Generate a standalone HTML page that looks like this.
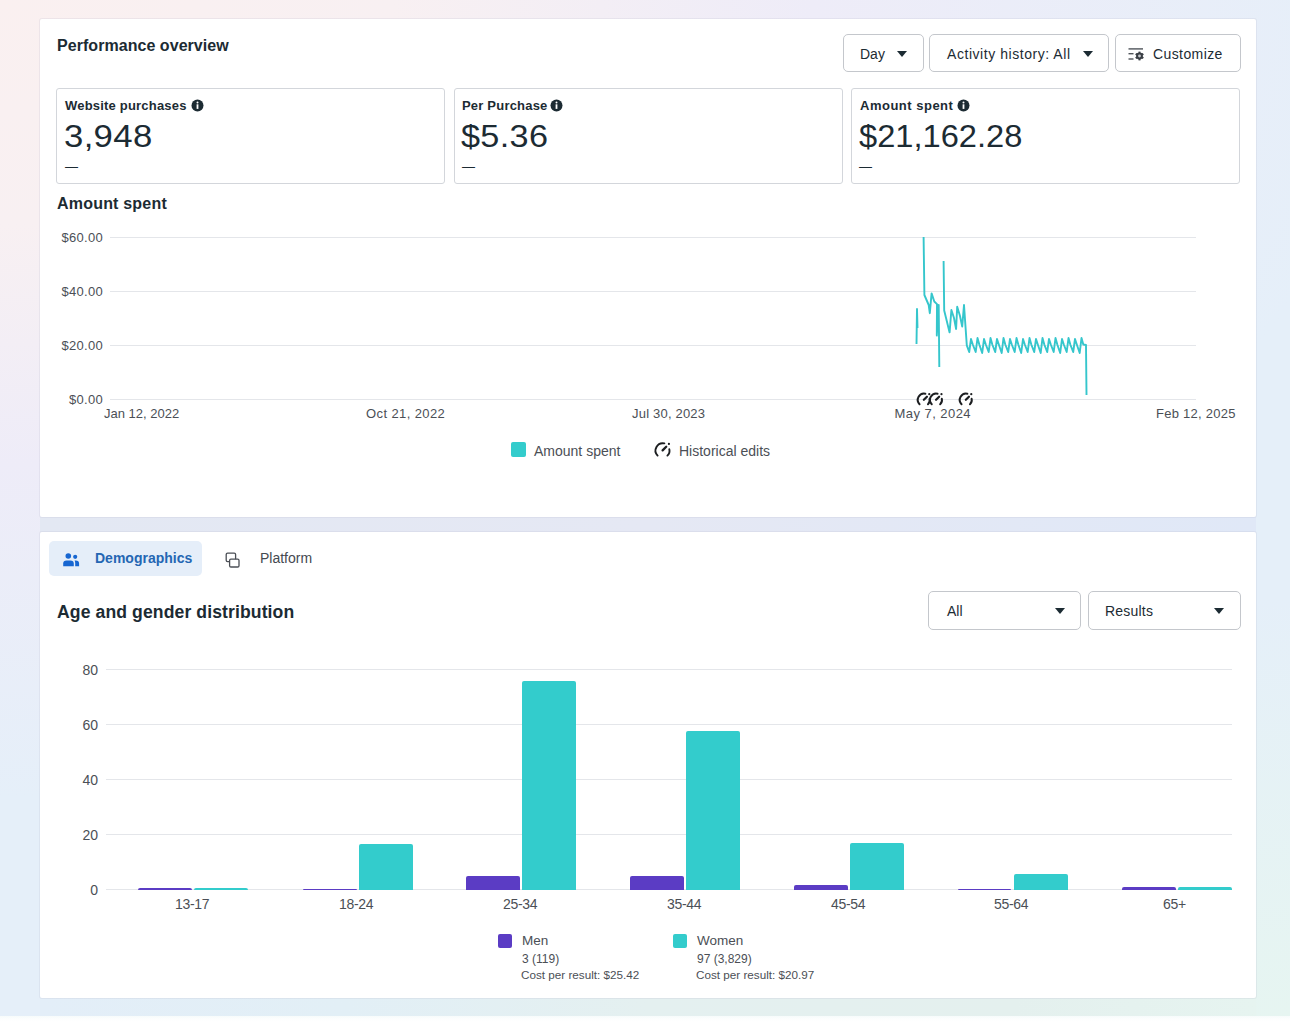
<!DOCTYPE html>
<html><head><meta charset="utf-8">
<style>
*{margin:0;padding:0;box-sizing:border-box}
html,body{width:1290px;height:1027px;overflow:hidden}
body{position:relative;font-family:"Liberation Sans",sans-serif;color:#1c2b33;background:#fcfdfd;}
#bg2{position:absolute;left:0;top:0;width:1290px;height:1016px;background:radial-gradient(ellipse 820px 420px at 1290px 1016px,rgba(230,245,241,1) 0%,rgba(230,245,241,0.55) 50%,rgba(230,245,241,0) 100%),radial-gradient(ellipse 1400px 800px at 0 0,rgb(250,240,240) 0%,rgb(248,240,242) 28%,rgb(238,236,248) 58%,rgba(232,237,248,0) 100%),#e5eff9;}
#bg3{display:none}
#strip{position:absolute;left:0;top:1016px;width:1290px;height:11px;background:linear-gradient(180deg,#f6fbfb 0,#fdfefe 3px,#fff 6px)}
#gap{position:absolute;left:40px;top:517px;width:1216px;height:15px;background:linear-gradient(90deg,rgb(227,232,243),rgb(229,232,244) 50%,rgb(224,232,247))}
#bband{position:absolute;left:40px;top:998px;width:1216px;height:18px;background:linear-gradient(90deg,rgb(227,238,248),rgb(226,239,246) 25%,rgb(228,240,240) 50%,rgb(228,240,238) 80%,rgb(230,244,240))}
.card{position:absolute;left:40px;width:1216px;background:#fff;border-radius:2px;box-shadow:0 0 0 1px rgba(180,180,200,0.18)}
.t{position:absolute;white-space:nowrap;line-height:1}
.btn{position:absolute;border:1.3px solid #c4c7cc;border-radius:5px;background:#fff}
.arrow{position:absolute;width:0;height:0;border-left:5.5px solid transparent;border-right:5.5px solid transparent;border-top:6px solid #1c2b33}
.box{position:absolute;top:88px;height:96px;border:1px solid #d3d6db;border-radius:3px}
.grid{position:absolute;height:1px;background:#e4e6ea}
.lab{position:absolute;white-space:nowrap;line-height:1;font-size:13px;color:#4b4f56}
.bar{position:absolute;border-radius:2px 2px 0 0}
.m{background:#5b3cc4}
.w{background:#33cccc}
</style></head><body>
<div id="bg2"></div><div id="bg3"></div><div id="strip"></div><div id="gap"></div><div id="bband"></div>

<!-- CARD 1 -->
<div class="card" style="top:19px;height:498px"></div>
<div class="t" style="left:57px;top:38px;font-size:16px;font-weight:bold;letter-spacing:0.05px">Performance overview</div>

<div class="btn" style="left:843px;top:34px;width:81px;height:38px"></div>
<div class="t" style="left:860px;top:47px;font-size:14px;color:#1c2b33">Day</div>
<div class="arrow" style="left:897px;top:51px"></div>

<div class="btn" style="left:929px;top:34px;width:180px;height:38px"></div>
<div class="t" style="left:947px;top:47px;font-size:14px;letter-spacing:0.55px">Activity history: All</div>
<div class="arrow" style="left:1083px;top:51px"></div>

<div class="btn" style="left:1115px;top:34px;width:126px;height:38px"></div>
<svg style="position:absolute;left:1128px;top:47px" width="17" height="14" viewBox="0 0 17 14">
 <rect x="0.5" y="1.2" width="14.5" height="1.4" fill="#50555b"/>
 <rect x="0.5" y="6" width="5" height="1.4" fill="#50555b"/>
 <rect x="0.5" y="11.3" width="5" height="1.4" fill="#50555b"/>
 <g transform="translate(11.5 9)"><circle r="3.4" fill="#3a3f45"/><g fill="#3a3f45"><rect x="-1" y="-4.4" width="2" height="8.8"/><rect x="-1" y="-4.4" width="2" height="8.8" transform="rotate(60)"/><rect x="-1" y="-4.4" width="2" height="8.8" transform="rotate(120)"/></g><circle r="1.4" fill="#c8cbcf"/></g>
</svg>
<div class="t" style="left:1153px;top:47px;font-size:14px;letter-spacing:0.4px">Customize</div>

<div class="box" style="left:56px;width:389px"></div>
<div class="box" style="left:454px;width:389px"></div>
<div class="box" style="left:851px;width:389px"></div>

<div class="t" style="left:65px;top:99px;font-size:13px;font-weight:bold;letter-spacing:0.2px">Website purchases</div>
<svg style="position:absolute;left:191px;top:99px" width="13" height="13" viewBox="0 0 13 13"><circle cx="6.5" cy="6.5" r="6" fill="#1c2b33"/><rect x="5.6" y="5.3" width="1.8" height="4.6" fill="#fff"/><circle cx="6.5" cy="3.6" r="1" fill="#fff"/></svg>
<div class="t" style="left:64px;top:120px;font-size:32px;letter-spacing:0.3px;transform:scaleX(1.085);transform-origin:0 0">3,948</div>
<div class="t" style="left:65px;top:160px;font-size:13px">—</div>

<div class="t" style="left:462px;top:99px;font-size:13px;font-weight:bold;letter-spacing:0.2px">Per Purchase</div>
<svg style="position:absolute;left:550px;top:99px" width="13" height="13" viewBox="0 0 13 13"><circle cx="6.5" cy="6.5" r="6" fill="#1c2b33"/><rect x="5.6" y="5.3" width="1.8" height="4.6" fill="#fff"/><circle cx="6.5" cy="3.6" r="1" fill="#fff"/></svg>
<div class="t" style="left:461px;top:120px;font-size:32px;letter-spacing:0.3px;transform:scaleX(1.07);transform-origin:0 0">$5.36</div>
<div class="t" style="left:462px;top:160px;font-size:13px">—</div>

<div class="t" style="left:860px;top:99px;font-size:13px;font-weight:bold;letter-spacing:0.5px">Amount spent</div>
<svg style="position:absolute;left:957px;top:99px" width="13" height="13" viewBox="0 0 13 13"><circle cx="6.5" cy="6.5" r="6" fill="#1c2b33"/><rect x="5.6" y="5.3" width="1.8" height="4.6" fill="#fff"/><circle cx="6.5" cy="3.6" r="1" fill="#fff"/></svg>
<div class="t" style="left:859px;top:120px;font-size:32px;letter-spacing:0px;transform:scaleX(1.02);transform-origin:0 0">$21,162.28</div>
<div class="t" style="left:859px;top:160px;font-size:13px">—</div>

<div class="t" style="left:57px;top:196px;font-size:16px;font-weight:bold;letter-spacing:0.2px">Amount spent</div>

<!-- line chart grid -->
<div class="grid" style="left:110px;top:237px;width:1086px"></div>
<div class="grid" style="left:110px;top:291px;width:1086px"></div>
<div class="grid" style="left:110px;top:345px;width:1086px"></div>
<div class="grid" style="left:110px;top:399px;width:1086px"></div>
<div class="lab" style="right:1187px;top:231px;font-size:13px;letter-spacing:0.3px">$60.00</div>
<div class="lab" style="right:1187px;top:285px;font-size:13px;letter-spacing:0.3px">$40.00</div>
<div class="lab" style="right:1187px;top:339px;font-size:13px;letter-spacing:0.3px">$20.00</div>
<div class="lab" style="right:1187px;top:393px;font-size:13px;letter-spacing:0.3px">$0.00</div>

<div class="lab" style="left:104px;top:407px">Jan 12, 2022</div>
<div class="lab" style="left:366px;top:407px;letter-spacing:0.4px">Oct 21, 2022</div>
<div class="lab" style="left:632px;top:407px;letter-spacing:0.2px">Jul 30, 2023</div>
<div class="lab" style="left:894.5px;top:407px;letter-spacing:0.45px">May 7, 2024</div>
<div class="lab" style="left:1156px;top:407px;letter-spacing:0.25px">Feb 12, 2025</div>

<svg style="position:absolute;left:0;top:0" width="1290" height="520">
<!--MARKS--><g transform="translate(918.6 393) scale(0.86) translate(-656.5 -442.5)"><g fill="none" stroke="#1c1e21" stroke-width="2.3" stroke-linecap="round"><path d="M657.6 455.6 A7.3 7.3 0 0 1 664.4 443.4"/><path d="M669.3 449.2 A6.5 6.5 0 0 1 667.4 455.6"/><path d="M662.6 450.4 L666.2 446.8" stroke-width="2.6"/></g><circle cx="668.9" cy="443.9" r="1.3" fill="#1c1e21"/></g><g transform="translate(930.8 393) scale(0.86) translate(-656.5 -442.5)"><g fill="none" stroke="#1c1e21" stroke-width="2.3" stroke-linecap="round"><path d="M657.6 455.6 A7.3 7.3 0 0 1 664.4 443.4"/><path d="M669.3 449.2 A6.5 6.5 0 0 1 667.4 455.6"/><path d="M662.6 450.4 L666.2 446.8" stroke-width="2.6"/></g><circle cx="668.9" cy="443.9" r="1.3" fill="#1c1e21"/></g><g transform="translate(960.6 393) scale(0.86) translate(-656.5 -442.5)"><g fill="none" stroke="#1c1e21" stroke-width="2.3" stroke-linecap="round"><path d="M657.6 455.6 A7.3 7.3 0 0 1 664.4 443.4"/><path d="M669.3 449.2 A6.5 6.5 0 0 1 667.4 455.6"/><path d="M662.6 450.4 L666.2 446.8" stroke-width="2.6"/></g><circle cx="668.9" cy="443.9" r="1.3" fill="#1c1e21"/></g><!--/MARKS--><polyline fill="none" stroke="#35c6cc" stroke-width="1.9" stroke-linejoin="round" points="916.5,344 917,309 917.5,328"/>
<polyline id="ln2" fill="none" stroke="#35c6cc" stroke-width="1.9" stroke-linejoin="round" points="943.6,261.0 944.2,310.5 949.6,332.4 951.4,310.0 954.0,318.0 956.1,329.0 957.2,306.7 960.0,316.0 962.2,326.6 964.0,305.0 966.8,345.4 969.2,352.0 971.0,339.0 972.8,344.5 975.7,352.0 977.5,338.0 979.3,344.5 982.2,353.0 984.0,339.0 985.8,344.5 988.7,352.0 990.5,338.0 992.3,344.5 995.2,352.0 997.0,339.0 998.8,344.5 1001.7,353.0 1003.5,338.0 1005.3,344.5 1008.2,352.0 1010.0,339.0 1011.8,344.5 1014.7,352.0 1016.5,338.0 1018.3,344.5 1021.2,353.0 1023.0,339.0 1024.8,344.5 1027.7,352.0 1029.5,338.0 1031.3,344.5 1034.2,352.0 1036.0,339.0 1037.8,344.5 1040.7,353.0 1042.5,338.0 1044.3,344.5 1047.2,352.0 1049.0,339.0 1050.8,344.5 1053.7,352.0 1055.5,338.0 1057.3,344.5 1060.2,353.0 1062.0,339.0 1063.8,344.5 1066.7,352.0 1068.5,338.0 1070.3,344.5 1073.2,352.0 1075.0,339.0 1076.8,344.5 1079.7,353.0 1081.5,338.0 1083.3,344.5 1086.0,345.0 1086.5,395.0"/>
<polyline id="ln" fill="none" stroke="#35c6cc" stroke-width="1.9" stroke-linejoin="round" points="923.6,237.0 924.4,295.0 928.7,305.0 929.8,313.2 931.6,293.4 934.3,301.5 937.0,304.2 936.8,335.6 938.7,305.0 939.3,367.0"/>
</svg>

<div class="w" style="position:absolute;left:511px;top:442px;width:15px;height:15px;border-radius:2px"></div>
<div class="lab" style="left:534px;top:444px;font-size:14px">Amount spent</div>
<svg style="position:absolute;left:650px;top:438px" width="26" height="24" viewBox="650 438 26 24"><g fill="none" stroke="#1c1e21" stroke-width="1.9" stroke-linecap="round"><path d="M657.6 455.6 A7.3 7.3 0 0 1 664.4 443.4"/><path d="M669.3 449.2 A6.5 6.5 0 0 1 667.4 455.6"/><path d="M662.6 450.4 L666.2 446.8" stroke-width="2.3"/></g><circle cx="668.9" cy="443.9" r="1.1" fill="#1c1e21"/></svg>
<div class="lab" style="left:679px;top:444px;font-size:14px">Historical edits</div>

<!-- CARD 2 -->
<div class="card" style="top:532px;height:466px"></div>
<div style="position:absolute;left:49px;top:541px;width:153px;height:35px;background:#e5eef9;border-radius:5px"></div>
<svg style="position:absolute;left:62px;top:550px" width="20" height="18" viewBox="62 550 20 18"><g fill="#1766d1"><circle cx="68.3" cy="556" r="2.8"/><path d="M63.2 566.2 L63.2 563.5 Q63.2 560.4 66.5 560.4 L70.4 560.4 Q73.8 560.4 73.8 563.5 L73.8 566.2 Z"/><circle cx="75.2" cy="556.8" r="2.1"/><path d="M74.6 560.4 L75.8 560.4 Q79.1 560.4 79.1 563.5 L79.1 566.2 L75.2 566.2 L75.2 563.3 Q75.2 561.5 74.6 560.4Z"/></g></svg>
<div class="t" style="left:95px;top:551px;font-size:14px;font-weight:bold;color:#2466b3">Demographics</div>
<svg style="position:absolute;left:220px;top:548px" width="26" height="24" viewBox="220 548 26 24"><g fill="none" stroke="#4b4f56" stroke-width="1.3"><path d="M229.6 561.6 L227.6 561.6 Q226.2 561.6 226.2 560.2 L226.2 554.5 Q226.2 553.1 227.6 553.1 L234.2 553.1 Q235.6 553.1 235.6 554.5 L235.6 559.2"/><rect x="229.6" y="559.2" width="9.4" height="7.8" rx="1.3"/></g></svg>
<div class="t" style="left:260px;top:551px;font-size:14px;color:#444950">Platform</div>

<div class="t" style="left:57px;top:604px;font-size:17.6px;font-weight:bold;letter-spacing:0.1px">Age and gender distribution</div>

<div class="btn" style="left:928px;top:591px;width:153px;height:39px"></div>
<div class="t" style="left:947px;top:604px;font-size:14px">All</div>
<div class="arrow" style="left:1055px;top:608px"></div>
<div class="btn" style="left:1088px;top:591px;width:153px;height:39px"></div>
<div class="t" style="left:1105px;top:604px;font-size:14px;letter-spacing:0.2px">Results</div>
<div class="arrow" style="left:1214px;top:608px"></div>

<!-- bar chart grid -->
<div class="grid" style="left:106px;top:669px;width:1126px"></div>
<div class="grid" style="left:106px;top:724px;width:1126px"></div>
<div class="grid" style="left:106px;top:779px;width:1126px"></div>
<div class="grid" style="left:106px;top:834px;width:1126px"></div>
<div class="grid" style="left:106px;top:889px;width:1126px"></div>
<div class="lab" style="right:1192px;top:663px;font-size:14px">80</div>
<div class="lab" style="right:1192px;top:718px;font-size:14px">60</div>
<div class="lab" style="right:1192px;top:773px;font-size:14px">40</div>
<div class="lab" style="right:1192px;top:828px;font-size:14px">20</div>
<div class="lab" style="right:1192px;top:883px;font-size:14px">0</div>

<!--BARS--><div class="bar m" style="left:138.3px;top:888.3px;width:53.5px;height:1.3px"></div><div class="bar w" style="left:194.1px;top:888.3px;width:54px;height:1.3px"></div><div class="bar m" style="left:303.1px;top:888.5px;width:53.5px;height:1.1px"></div><div class="bar w" style="left:358.9px;top:843.6px;width:54px;height:46.0px"></div><div class="bar m" style="left:466.3px;top:876.3px;width:53.5px;height:13.3px"></div><div class="bar w" style="left:522.1px;top:680.5px;width:54px;height:209.1px"></div><div class="bar m" style="left:630.3px;top:876.3px;width:53.5px;height:13.3px"></div><div class="bar w" style="left:686.1px;top:730.5px;width:54px;height:159.1px"></div><div class="bar m" style="left:794.3px;top:884.5px;width:53.5px;height:5.1px"></div><div class="bar w" style="left:850.1px;top:843.0px;width:54px;height:46.6px"></div><div class="bar m" style="left:957.9px;top:888.5px;width:53.5px;height:1.1px"></div><div class="bar w" style="left:1013.7px;top:873.6px;width:54px;height:16.0px"></div><div class="bar m" style="left:1122.0px;top:886.7px;width:53.5px;height:2.9px"></div><div class="bar w" style="left:1177.8px;top:886.5px;width:54px;height:3.1px"></div><!--/BARS-->

<div class="lab" style="left:175px;top:897px;font-size:14px;letter-spacing:-0.3px">13-17</div>
<div class="lab" style="left:339px;top:897px;font-size:14px;letter-spacing:-0.3px">18-24</div>
<div class="lab" style="left:503px;top:897px;font-size:14px;letter-spacing:-0.3px">25-34</div>
<div class="lab" style="left:667px;top:897px;font-size:14px;letter-spacing:-0.3px">35-44</div>
<div class="lab" style="left:831px;top:897px;font-size:14px;letter-spacing:-0.3px">45-54</div>
<div class="lab" style="left:994px;top:897px;font-size:14px;letter-spacing:-0.3px">55-64</div>
<div class="lab" style="left:1163px;top:897px;font-size:14px;letter-spacing:-0.3px">65+</div>

<div class="m" style="position:absolute;left:498px;top:934px;width:14px;height:14px;border-radius:2px"></div>
<div class="lab" style="left:522px;top:934px;font-size:13.5px">Men</div>
<div class="lab" style="left:522px;top:953px;font-size:12px">3 (119)</div>
<div class="lab" style="left:521px;top:969px;font-size:11.7px">Cost per result: $25.42</div>
<div class="w" style="position:absolute;left:673px;top:934px;width:14px;height:14px;border-radius:2px"></div>
<div class="lab" style="left:697px;top:934px;font-size:13.5px">Women</div>
<div class="lab" style="left:697px;top:953px;font-size:12px">97 (3,829)</div>
<div class="lab" style="left:696px;top:969px;font-size:11.7px">Cost per result: $20.97</div>
</body></html>
